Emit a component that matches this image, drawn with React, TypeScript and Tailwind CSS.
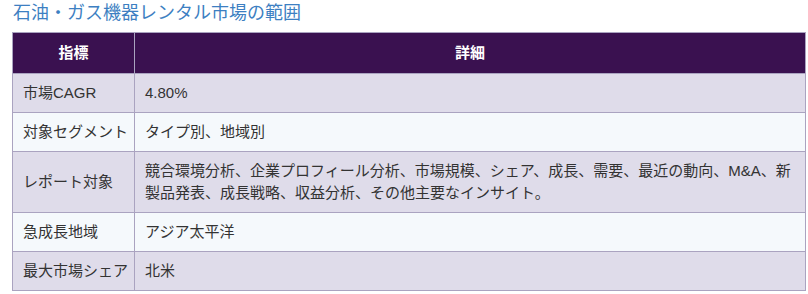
const rows: [string, string][] = [
  ["市場CAGR", "4.80%"],
  ["対象セグメント", "タイプ別、地域別"],
  [
    "レポート対象",
    "競合環境分析、企業プロフィール分析、市場規模、シェア、成長、需要、最近の動向、M&A、新製品発表、成長戦略、収益分析、その他主要なインサイト。",
  ],
  ["急成長地域", "アジア太平洋"],
  ["最大市場シェア", "北米"],
];

export default function App() {
  return (
    <div
      className="w-[808px] h-[294px] bg-white overflow-hidden pl-[12px]"
      style={{ fontFamily: '"Liberation Sans", "Noto Sans CJK JP", sans-serif' }}
    >
      <h2 className="text-[18px] leading-[26px] text-[#3d7fc2] pl-[1px]">
        石油・ガス機器レンタル市場の範囲
      </h2>
      <table className="mt-[6px] w-[794px] table-fixed border-collapse text-[15px] leading-[22px] text-[#333]">
        <colgroup>
          <col className="w-[122px]" />
          <col />
        </colgroup>
        <thead>
          <tr className="bg-[#3a1150] text-white">
            <th className="border border-[#aaa3c0] py-[9px] font-semibold text-center">指標</th>
            <th className="border border-[#aaa3c0] py-[9px] font-semibold text-center">詳細</th>
          </tr>
        </thead>
        <tbody>
          {rows.map(([k, v], i) => (
            <tr key={k} className={i % 2 === 0 ? "bg-[#dfdcea]" : "bg-[#f5f9fc]"}>
              <td className="border border-[#aaa3c0] pl-[10px] pr-[4px] py-[8px] align-middle whitespace-nowrap">{k}</td>
              <td className="border border-[#aaa3c0] pl-[10px] pr-[9px] py-[8px] align-middle">{v}</td>
            </tr>
          ))}
        </tbody>
      </table>
    </div>
  );
}
